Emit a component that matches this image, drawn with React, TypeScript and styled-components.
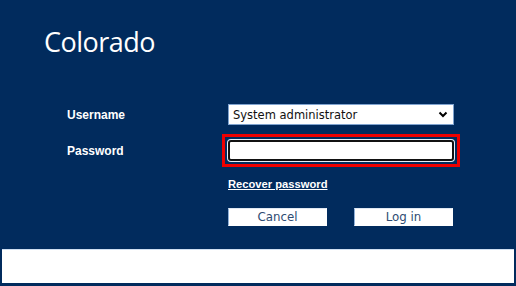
import React from "react";
import styled, { createGlobalStyle } from "styled-components";

const NAVY = "#012b5d";

const Global = createGlobalStyle`
  html, body { margin: 0; padding: 0; background: ${NAVY}; }
  body { font-family: "Liberation Sans", Arial, sans-serif; }
  * { box-sizing: border-box; }
`;

const Page = styled.div`
  height: 100vh;
  display: flex;
  flex-direction: column;
  background: ${NAVY};
`;

const Main = styled.main`
  flex: 1;
  padding: 26px 0 0 44px;
`;

const Title = styled.h1`
  margin: 0;
  font-family: "Open Sans", "Noto Sans", sans-serif;
  font-weight: 400;
  font-size: 27px;
  letter-spacing: -0.5px;
  line-height: 32px;
  color: #ffffff;
`;

const Form = styled.form`
  margin: 46px 0 0 23px;
  display: flex;
  flex-direction: column;
`;

const Row = styled.div<{ $gap?: number }>`
  display: grid;
  grid-template-columns: 161px 226px;
  align-items: center;
  margin-top: ${(p) => p.$gap ?? 0}px;
`;

const Label = styled.label`
  font-family: "Liberation Sans", Arial, sans-serif;
  font-weight: 700;
  font-size: 12px;
  color: #ffffff;
`;

const SelectWrap = styled.div`
  position: relative;
  height: 21px;
`;

const Select = styled.select`
  appearance: none;
  width: 100%;
  height: 21px;
  margin: 0;
  padding: 0 24px 0 4px;
  border: 1px solid #7fa3cf;
  border-radius: 0;
  background: #ffffff;
  font-family: "DejaVu Sans", Verdana, sans-serif;
  font-size: 11.5px;
  color: #111111;
  outline: none;
`;

const Chevron = styled.svg`
  position: absolute;
  right: 6px;
  top: 7px;
  pointer-events: none;
`;

const ErrorBox = styled.div`
  margin: 0 -6px;
  padding: 3px;
  border: 3px solid #ee0000;
`;

const PasswordInput = styled.input`
  display: block;
  width: 100%;
  height: 21px;
  margin: 0;
  padding: 0 4px;
  border: 2px solid #111111;
  border-radius: 3px;
  box-shadow: 0 0 0 1px #e8eef6;
  background: #ffffff;
  outline: none;
  font-size: 12px;
`;

const RecoverLink = styled.a`
  grid-column: 2;
  font-family: "Liberation Sans", Arial, sans-serif;
  font-weight: 700;
  font-size: 11.2px;
  line-height: 14px;
  color: #ffffff;
  text-decoration: underline;
  justify-self: start;
`;

const Buttons = styled.div`
  grid-column: 2;
  display: flex;
  justify-content: space-between;
  width: 225px;
`;

const Button = styled.button`
  width: 99px;
  height: 18px;
  margin: 0;
  padding: 0;
  border: 1px solid #ffffff;
  border-left-color: #8fb0d8;
  border-top-color: #dfe8f3;
  border-radius: 0;
  background: #ffffff;
  font-family: "DejaVu Sans", Verdana, sans-serif;
  font-size: 11.8px;
  line-height: 16px;
  color: #2e4b72;
`;

const Footer = styled.footer`
  height: 34px;
  margin: 0 2px 3px;
  background: #ffffff;
  border-top: 1px solid #cfdff2;
`;

export default function App() {
  return (
    <>
      <Global />
      <Page>
        <Main>
          <Title>Colorado</Title>
          <Form onSubmit={(e) => e.preventDefault()}>
            <Row>
              <Label htmlFor="user">Username</Label>
              <SelectWrap>
                <Select id="user" defaultValue="admin">
                  <option value="admin">System administrator</option>
                </Select>
                <Chevron width="10" height="7" viewBox="0 0 10 7">
                  <path d="M1.5 1.5 L5 5 L8.5 1.5" fill="none" stroke="#000" strokeWidth="2" />
                </Chevron>
              </SelectWrap>
            </Row>
            <Row $gap={9}>
              <Label htmlFor="pw">Password</Label>
              <ErrorBox>
                <PasswordInput id="pw" type="password" />
              </ErrorBox>
            </Row>
            <Row $gap={10}>
              <RecoverLink href="#">Recover password</RecoverLink>
            </Row>
            <Row $gap={17}>
              <Buttons>
                <Button type="button">Cancel</Button>
                <Button type="submit">Log in</Button>
              </Buttons>
            </Row>
          </Form>
        </Main>
        <Footer />
      </Page>
    </>
  );
}
